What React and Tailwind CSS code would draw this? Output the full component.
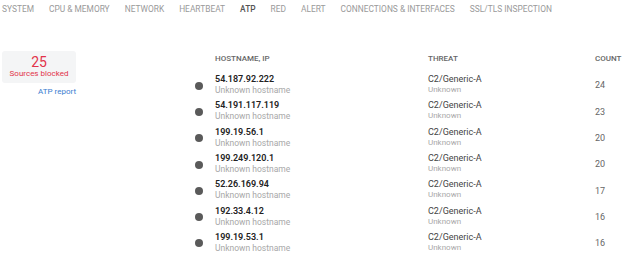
import React from "react";

const tabs = ["SYSTEM", "CPU & MEMORY", "NETWORK", "HEARTBEAT", "ATP", "RED", "ALERT", "CONNECTIONS & INTERFACES", "SSL/TLS INSPECTION"];

const rows = [
  ["54.187.92.222", 24],
  ["54.191.117.119", 23],
  ["199.19.56.1", 20],
  ["199.249.120.1", 20],
  ["52.26.169.94", 17],
  ["192.33.4.12", 16],
  ["199.19.53.1", 16],
];

export default function App() {
  return (
    <div className="w-[640px] h-[255px] bg-white overflow-hidden" style={{ fontFamily: "Roboto, 'Liberation Sans', sans-serif" }}>
      <div className="flex h-[18px] items-center pl-[2px] gap-[15px] text-[8.4px] text-[#9a9a9a]">
        {tabs.map((t) => (
          <span key={t} className={t === "ATP" ? "text-[#555] font-medium" : ""}>{t}</span>
        ))}
      </div>
      <div className="flex">
        <div className="w-[193px] pl-[2px] pt-[33px]">
          <div className="w-[74px] h-[32px] bg-[#f4f5f6] rounded-[3px] flex flex-col items-center justify-center text-[#e2334a]">
            <div className="text-[14px] leading-[14px]">25</div>
            <div className="text-[8px] leading-[10px]">Sources blocked</div>
          </div>
          <div className="w-[74px] text-right text-[8px] text-[#3a7dd0] mt-[4px] leading-[10px]">ATP report</div>
        </div>
        <div className="flex-1">
          <div className="flex h-[53px] items-end pb-[6px] text-[8px] text-[#666] font-medium">
            <div className="w-[22px]" />
            <div className="w-[213px]">HOSTNAME, IP</div>
            <div className="w-[167px]">THREAT</div>
            <div>COUNT</div>
          </div>
          <div className="flex flex-col">
            {rows.map(([ip, c]) => (
              <div key={ip} className="flex h-[26.3px] items-center">
                <div className="w-[22px] flex justify-start pl-[2px]">
                  <div className="w-[8px] h-[8px] rounded-full bg-[#5a5a5a] mt-[3px]" />
                </div>
                <div className="w-[213px] flex flex-col">
                  <span className="text-[9px] leading-[12px] text-[#222] font-semibold">{ip}</span>
                  <span className="text-[8.5px] leading-[10px] text-[#a8a8a8]">Unknown hostname</span>
                </div>
                <div className="w-[167px] flex flex-col">
                  <span className="text-[9px] leading-[12px] text-[#444]">C2/Generic-A</span>
                  <span className="text-[8px] leading-[10px] text-[#a8a8a8]">Unknown</span>
                </div>
                <div className="text-[9px] text-[#666] pt-[4px]">{c}</div>
              </div>
            ))}
          </div>
        </div>
      </div>
    </div>
  );
}
